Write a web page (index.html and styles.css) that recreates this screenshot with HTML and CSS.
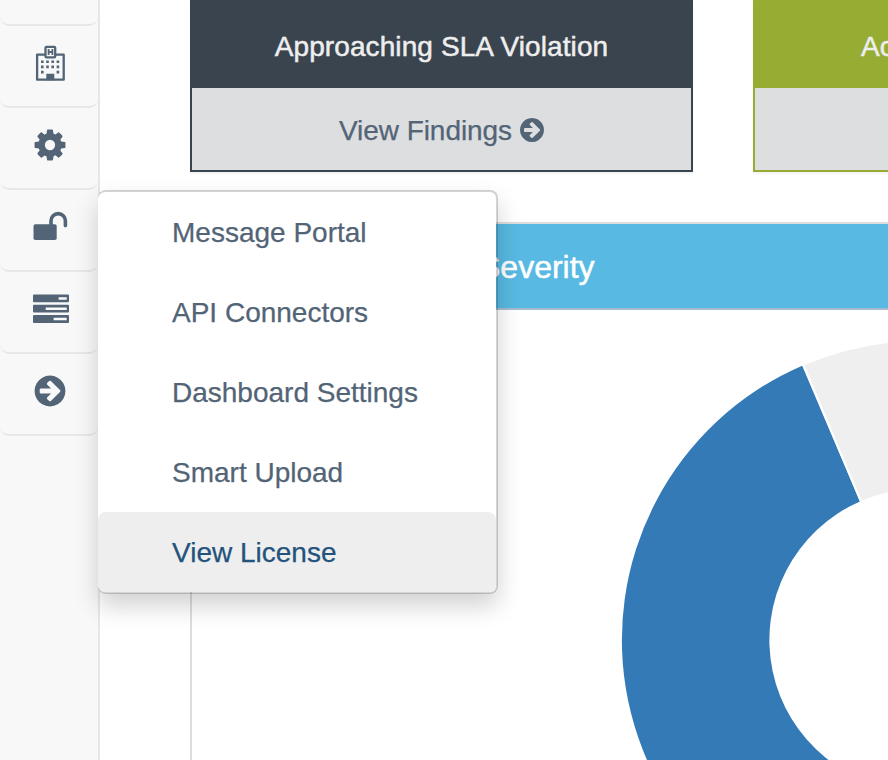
FILE: index.html
```html
<!DOCTYPE html>
<html lang="en">
<head>
<meta charset="utf-8">
<title>Dashboard</title>
<link rel="stylesheet" href="styles.css">
</head>
<body>
<svg class="defs" aria-hidden="true">
  <symbol id="arrow" viewBox="0 0 1792 1792"><path d="M1413 896q0-27-18-45l-91-91-362-362q-18-18-45-18t-45 18l-91 91q-18 18-18 45t18 45l189 189h-502q-26 0-45 19t-19 45v128q0 26 19 45t45 19h502l-189 189q-19 19-19 45t19 45l91 91q18 18 45 18t45-18l362-362 91-91q18-18 18-45zm251 0q0 209-103 385.5t-279.5 279.5-385.5 103-385.5-103-279.5-279.5-103-385.5 103-385.5 279.5-279.5 385.5-103 385.5 103 279.5 279.5 103 385.5z"/></symbol>
</svg>
<div class="app">
  <nav class="sidebar">
    <div class="nav-item nav-item-cut"></div>
    <div class="nav-item nav-item-tall">
      <svg class="icon" width="38" height="40" viewBox="0 0 38 40">
        <path class="line" d="M13.5 13.7H6.1V38.7H32.7V13.7H25.2M15.5 5.8H23.2Q24.2 5.8 24.2 6.8V15.4Q24.2 16.4 23.2 16.4H15.5Q14.5 16.4 14.5 15.4V6.8Q14.5 5.8 15.5 5.8Z"/>
        <path d="M16.7 7.9h1.8v2.2h2V7.9h1.8v6.2h-1.8v-2.2h-2v2.2h-1.8zM15.3 32.7h8v6.6h-8z"/>
        <path d="M10 19.4h2.6v2.6h-2.6zM15.2 19.4h2.6v2.6h-2.6zM20.4 19.4h2.6v2.6h-2.6zM25.6 19.4h2.6v2.6h-2.6zM10 24.6h2.6v2.6h-2.6zM15.2 24.6h2.6v2.6h-2.6zM20.4 24.6h2.6v2.6h-2.6zM25.6 24.6h2.6v2.6h-2.6zM10 29.8h2.6v2.6h-2.6zM25.6 29.8h2.6v2.6h-2.6z"/>
      </svg>
    </div>
    <div class="nav-item">
      <svg class="icon" width="36" height="36" viewBox="0 0 1792 1792"><path d="M1152 896q0-106-75-181t-181-75-181 75-75 181 75 181 181 75 181-75 75-181zm512-109v222q0 12-8 23t-20 13l-185 28q-19 54-39 91 35 50 107 138 10 12 10 25t-9 23q-27 37-99 108t-94 71q-12 0-26-9l-138-108q-44 23-91 38-16 136-29 186-7 28-36 28h-222q-14 0-24.500-8.500t-11.500-21.500l-28-184q-49-16-90-37l-141 107q-10 9-25 9-14 0-25-11-126-114-165-168-7-10-7-23 0-12 8-23 15-21 51-66.500t54-70.500q-27-50-41-99l-183-27q-13-2-21-12.500t-8-23.500v-222q0-12 8-23t19-13l186-28q14-46 39-92-40-57-107-138-10-12-10-24 0-10 9-23 26-36 98.500-107.500t94.500-71.500q13 0 26 10l138 107q44-23 91-38 16-136 29-186 7-28 36-28h222q14 0 24.500 8.500t11.500 21.500l28 184q49 16 90 37l142-107q9-9 24-9 13 0 25 10 129 119 165 170 7 8 7 22 0 12-8 23-15 21-51 66.500t-54 70.500q26 50 41 98l183 28q13 2 21 12.500t8 23.500z"/></svg>
    </div>
    <div class="nav-item">
      <svg class="icon" width="36" height="36" viewBox="0 0 36 36">
        <rect x="1.500" y="15.300" width="23.200" height="15.700" rx="1.800"/>
        <path class="shackle" d="M19 16V11.800a7.200 7.200 0 0 1 14.400 0V16.600"/>
      </svg>
      <div class="menu">
        <a class="menu-item">Message Portal</a>
        <a class="menu-item">API Connectors</a>
        <a class="menu-item">Dashboard Settings</a>
        <a class="menu-item">Smart Upload</a>
        <a class="menu-item menu-item-active">View License</a>
      </div>
    </div>
    <div class="nav-item nav-item-wide">
      <svg class="icon" width="36" height="36" viewBox="0 0 36 36"><path fill-rule="evenodd" d="M1 3.500H35Q36 3.500 36 4.500V10.300Q36 11.300 35 11.300H1Q0 11.300 0 10.300V4.500Q0 3.500 1 3.500ZM25.600 6.200V8.700H33.700V6.200ZM1 13.800H35Q36 13.800 36 14.800V20.600Q36 21.600 35 21.600H1Q0 21.600 0 20.600V14.800Q0 13.800 1 13.800ZM12.700 16.500V19H33.700V16.500ZM1 24.100H35Q36 24.100 36 25.100V30.900Q36 31.900 35 31.900H1Q0 31.900 0 30.900V25.100Q0 24.100 1 24.100ZM20.600 26.800V29.300H33.700V26.800Z"/></svg>
    </div>
    <div class="nav-item">
      <svg class="icon" width="36" height="36"><use href="#arrow"/></svg>
    </div>
  </nav>
  <main class="main">
    <div class="cards">
      <section class="card">
        <h2 class="card-title">Approaching SLA Violation</h2>
        <a class="card-link"><span class="findings">View Findings</span><svg class="icon" width="28" height="28"><use href="#arrow"/></svg></a>
      </section>
      <section class="card card-green">
        <h2 class="card-title">Ac</h2>
        <a class="card-link"></a>
      </section>
    </div>
    <section class="panel">
      <h2 class="panel-title"><span class="severity">Severity</span></h2>
      <svg class="chart" width="696" height="450" viewBox="0 0 696 450">
        <path fill="#efefef" d="M610.600 56A298.800 298.800 0 0 1 728.800 31.200V178.700A151.300 151.300 0 0 0 668.300 191.300Z"/>
        <path fill="#337ab7" d="M728.800 628.800A298.800 298.800 0 0 1 610.200 55.700L668 191.400A151.300 151.300 0 0 0 728.800 481.300Z"/>
        <path class="divider" d="M611 54L669.400 192.600"/>
      </svg>
    </section>
  </main>
</div>
</body>
</html>
```
FILE: styles.css
```css
* { box-sizing: border-box; }
body {
  margin: 0;
  overflow: hidden;
  background: #fff;
  color: #526476;
  font: 28px/40px "Liberation Sans", Arial, sans-serif;
  -webkit-text-stroke: .25px currentColor;
}
.defs { display: none; }
.app { display: flex; height: 760px; overflow: hidden; }
.sidebar {
  position: relative;
  z-index: 2;
  flex: none;
  width: 100px;
  background: #f8f8f8;
  border-right: 2px solid #e7e7e7;
}
.nav-item {
  position: relative;
  display: flex;
  align-items: center;
  justify-content: center;
  height: 82px;
  padding: 0 0 6px 2px;
  border-bottom: 2px solid #e7e7e7;
  border-radius: 9px;
}
.nav-item-cut { height: 26px; }
.nav-item-tall { padding: 0 0 10px 1px; }
.nav-item-wide { padding-left: 4px; }
.icon { display: block; fill: #526476; -webkit-text-stroke: 0; }
.line { fill: none; stroke: #526476; stroke-width: 2.3; stroke-linejoin: round; }
.shackle { fill: none; stroke: #526476; stroke-width: 3.6; stroke-linecap: round; }
.menu {
  position: absolute;
  z-index: 1;
  top: 0;
  left: 98px;
  width: 400px;
  height: 404px;
  border: 2px solid rgba(0, 0, 0, .17);
  border-left: 0;
  border-radius: 8px;
  background: #fff;
  background-clip: padding-box;
  box-shadow: 0 12px 24px rgba(0, 0, 0, .18);
}
.menu-item {
  display: block;
  height: 80px;
  padding: 21px 0 19px 74px;
  white-space: nowrap;
}
.menu-item-active { background: #eee; color: #23527c; border-radius: 8px; }
.main { flex: none; width: 788px; padding-left: 90px; overflow: hidden; }
.cards { display: flex; gap: 60px; width: 1066px; }
.card {
  width: 503px;
  height: 172px;
  border: 2px solid #3a444e;
  border-top: 0;
  background: #dddee0;
  box-shadow: 0 2px 2px rgba(0, 0, 0, .05);
}
.card-title {
  height: 88px;
  margin: 0;
  padding-top: 27px;
  background: #3a444e;
  color: #eee;
  font-size: 28px;
  font-weight: 400;
  letter-spacing: .1px;
  text-align: center;
  -webkit-text-stroke: .5px #eee;
}
.card-link { display: flex; align-items: center; justify-content: center; gap: 6px; height: 82px; padding-top: 2px; }
.findings { padding-top: 2px; margin-left: 2px; letter-spacing: -.05px; }
.card-green { border-color: #96ac33; }
.card-green .card-title { background: #96ac33; padding-left: 106px; text-align: left; }
.panel { width: 720px; margin-top: 50px; border: 2px solid #ddd; border-bottom: 0; }
.panel-title {
  height: 86px;
  margin: 0;
  padding: 23px 0 0 287px;
  border-bottom: 2px solid #a6bcd0;
  background: #58b9e2;
  color: #fff;
  font-size: 32px;
  font-weight: 400;
  -webkit-text-stroke: .5px #fff;
}
.chart { display: block; }
.divider { stroke: #fff; stroke-width: 2; }
```
